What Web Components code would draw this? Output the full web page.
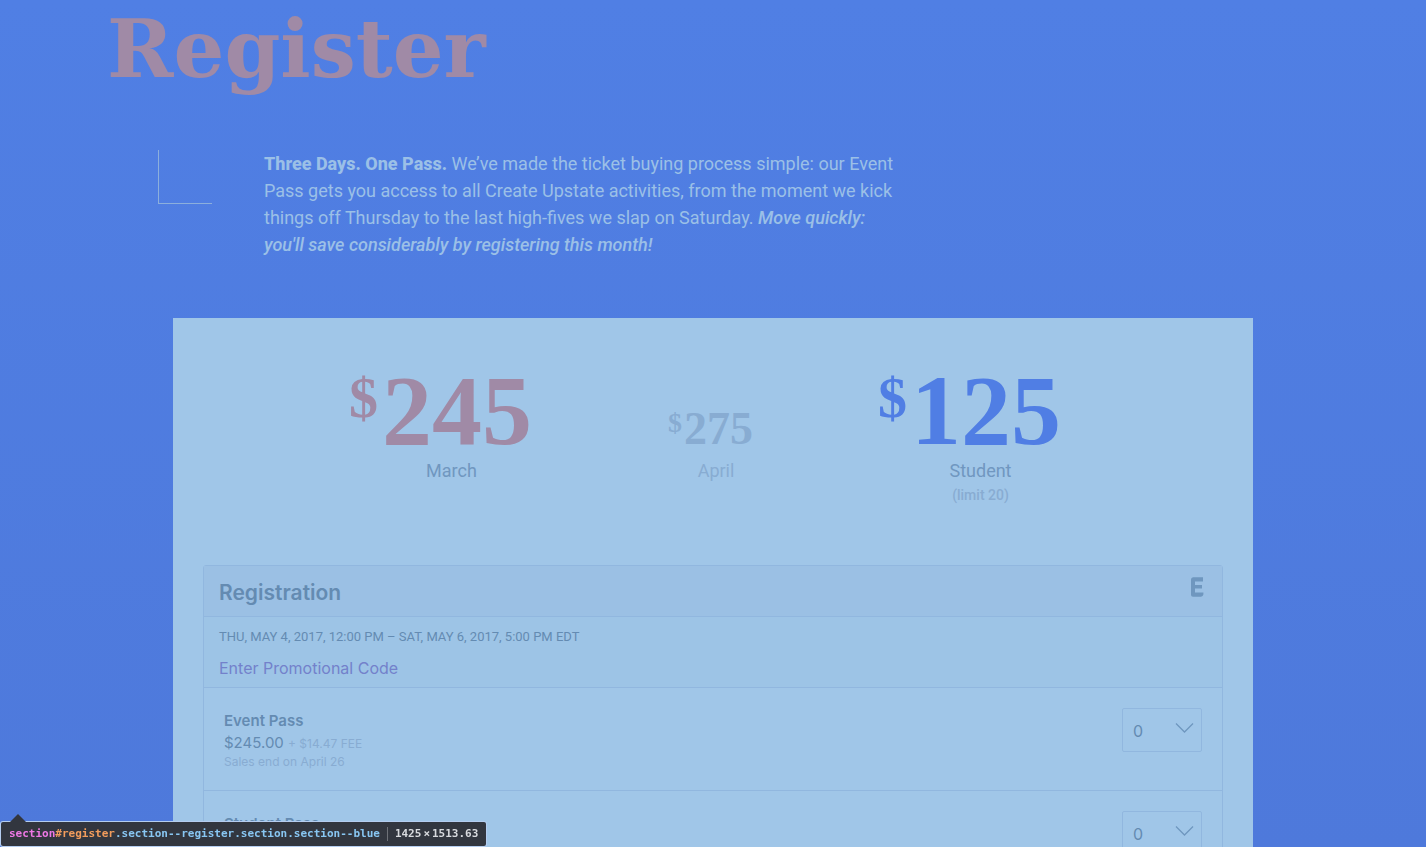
<!DOCTYPE html>
<html lang="en">
<head>
<meta charset="utf-8">
<title>Register – Create Upstate</title>
<style>
  html, body { margin: 0; height: 100%; }
  body { font-family: Roboto, "Liberation Sans", sans-serif; background: #4f7cdf; overflow: hidden; }
</style>
</head>
<body>
<register-section id="register">
  <span slot="title">Register</span>
  <section-intro slot="intro"><b>Three Days. One Pass.</b> We’ve made the ticket buying process simple: our Event Pass gets you access to all Create Upstate activities, from the moment we kick things off Thursday to the last high-fives we slap on Saturday. <em>Move quickly: you'll save considerably by registering this month!</em></section-intro>
  <price-tag slot="prices" amount="245" class="now">March</price-tag>
  <price-tag slot="prices" amount="275" class="later">April</price-tag>
  <price-tag slot="prices" amount="125" class="student">Student<small slot="note">(limit 20)</small></price-tag>
  <ticket-widget slot="tickets">
    <span slot="heading">Registration</span>
    <span slot="date">THU, MAY 4, 2017, 12:00 PM – SAT, MAY 6, 2017, 5:00 PM EDT</span>
    <ticket-row name="Event Pass" price="$245.00" fee="+ $14.47 FEE">Sales end on April 26</ticket-row>
    <ticket-row name="Student Pass" price="$125.00" fee="+ $7.87 FEE">Sales end on April 26</ticket-row>
  </ticket-widget>
</register-section>
<inspect-tip width="1425" height="1513.63">
  <span slot="tag">section</span><span slot="id">#register</span><span slot="classes">.section--register.section.section--blue</span>
</inspect-tip>

<script>
const define = (name, html, setup) => customElements.define(name, class extends HTMLElement {
  constructor() {
    super();
    const t = document.createElement('template');
    t.innerHTML = html;
    this.attachShadow({ mode: 'open' }).appendChild(t.content.cloneNode(true));
  }
  connectedCallback() { if (setup) setup(this, this.shadowRoot); }
});

define('register-section', `
<style>
  :host { display: block; height: 100%; overflow: hidden; background: linear-gradient(#507fe4, #4e79db); }
  .wrap { max-width: 1212px; margin: 0 auto; padding-top: 8px; }
  h1 { margin: 0; font: bold 80px/82px "DejaVu Serif", serif; color: #a08aa6; }
  .intro { margin: 60px 0 60px 51px; }
  .card { max-width: 1020px; margin: 0 auto; padding: 45px 30px 30px; background: #a0c6e8; }
  .prices { display: flex; justify-content: center; align-items: baseline; gap: 114px; min-height: 144px; margin-bottom: 58px; padding-left: 6px; }
</style>
<section class="wrap">
  <h1><slot name="title"></slot></h1>
  <div class="intro"><slot name="intro"></slot></div>
  <div class="card">
    <div class="prices"><slot name="prices"></slot></div>
    <slot name="tickets"></slot>
  </div>
</section>`);

define('section-intro', `
<style>
  :host { display: flex; align-items: flex-start; gap: 52px; }
  .corner { flex: none; width: 53px; height: 53px; border: solid #8cafdc; border-width: 0 0 1px 1px; }
  p { margin: 0; max-width: 640px; font-size: 18px; line-height: 27px; color: #9bc0e7; }
  ::slotted(b) { font-weight: 800; }
  ::slotted(em) { font-weight: 500; }
</style>
<div class="corner"></div><p><slot></slot></p>`);

define('price-tag', `
<style>
  :host { display: block; text-align: center; color: #7097c0; --tone: #a08aa6; }
  :host(.student) { --tone: #507ee4; }
  :host(.later) { --tone: #88acd2; color: #88acd2; }
  .price { font: bold 100px/96px "Liberation Serif", serif; color: var(--tone); padding-right: 22px; }
  .price span { font-size: 58px; line-height: 0; vertical-align: 27px; margin-right: 4px; }
  :host(.later) .price { font-size: 46px; line-height: 60px; padding-right: 11px; }
  :host(.later) .price span { font-size: 28px; vertical-align: 12px; margin-right: 2px; }
  .label { font-size: 18px; line-height: 24px; }
  ::slotted(small) { display: block; font-size: 14px; font-weight: 500; color: #88acd2; }
  .note { line-height: 24px; }
</style>
<div class="price"><span>$</span><b></b></div>
<div class="label"><slot></slot></div>
<div class="note"><slot name="note"></slot></div>`,
(el, root) => { root.querySelector('b').textContent = el.getAttribute('amount'); });

define('ticket-widget', `
<style>
  :host { display: block; font-family: Inter, "Liberation Sans", sans-serif; color: #648bb2; border: 1px solid #91b7df; border-radius: 3px; }
  header { display: flex; justify-content: space-between; align-items: flex-start; padding: 11px 18px 7px 15px; background: #9bc0e4; border-bottom: 1px solid #91b7df; }
  h2 { margin: 0; font-size: 21px; line-height: 32px; font-weight: 600; }
  .info { padding: 10px 15px 9px; background: #9dc4e6; border-bottom: 1px solid #91b7df; }
  .date { font: 13px/20px Roboto, sans-serif; }
  a { display: block; width: max-content; margin-top: 11px; font-size: 16px; line-height: 20px; color: #7381cb; text-decoration: none; }
  svg { display: block; }
</style>
<header>
  <h2><slot name="heading"></slot></h2>
  <svg width="14" height="20" viewBox="0 0 14 20" aria-hidden="true"><path fill="#6f97bf" d="M1 2.4 Q1 .4 3 .2 L13 .2 V4.4 H5 V8 H12 V11.6 H5 V15.6 H13.4 V17.6 Q13 19.6 11 19.8 H3 Q1 19.8 1 18Z"/></svg>
</header>
<div class="info">
  <div class="date"><slot name="date"></slot></div>
  <a href="#promo">Enter Promotional Code</a>
</div>
<slot></slot>`);

define('ticket-row', `
<style>
  :host { display: flex; justify-content: space-between; align-items: flex-start; padding: 20px; border-bottom: 1px solid #91b7df; }
  label { display: block; font-size: 15px; line-height: 22px; font-weight: 600; padding-top: 2px; }
  .cost { font-size: 15px; line-height: 22px; }
  .cost small { font-size: 12px; line-height: 1; color: #88acd2; }
  .until { font-size: 12px; line-height: 16px; color: #88acd2; }
  .pick { display: grid; width: 80px; height: 44px; }
  .pick > * { grid-area: 1 / 1; }
  select { appearance: none; box-sizing: border-box; width: 100%; height: 100%; margin: 0; padding: 2px 10px 0; border: 1px solid #91b7df; border-radius: 2px; background: transparent; font: 16px/20px Inter, sans-serif; color: #648bb2; }
  svg { justify-self: end; margin: 15px 8px 0 0; pointer-events: none; }
</style>
<div><label for="qty"></label>
  <div class="cost"><span></span> <small></small></div>
  <div class="until"><slot></slot></div>
</div>
<div class="pick">
  <select id="qty"><option>0</option><option>1</option><option>2</option></select>
  <svg width="19" height="11" viewBox="0 0 19 11" fill="none" stroke="#6f97bf" stroke-width="1.3"><path d="M1 .5 L9.5 9 L18 .5"/></svg>
</div>`,
(el, root) => {
  root.querySelector('label').textContent = el.getAttribute('name');
  root.querySelector('.cost span').textContent = el.getAttribute('price');
  root.querySelector('small').textContent = el.getAttribute('fee');
});

define('inspect-tip', `
<style>
  :host { position: fixed; left: 1px; bottom: 1px; box-sizing: border-box; display: flex; align-items: center; height: 24px; padding: 0 8px; background: #32363f; border-radius: 2px; box-shadow: 0 0 0 1px #b4cdf0; font: bold 11px/14px "DejaVu Sans Mono", monospace; white-space: nowrap; }
  svg { position: absolute; left: 9px; top: -8px; }
  .tag { color: #ee78e6; } .id { color: #f29c5c; } .cls { color: #88c6f2; }
  .size { margin-left: 7px; padding-left: 7px; border-left: 1px solid #6e7178; color: #d8dade; }
  i { font-style: normal; margin: 0 2px; }
</style>
<svg width="16" height="8" viewBox="0 0 16 8"><path fill="#32363f" d="M0 8 L8 0 L16 8Z"/></svg>
<span class="tag"><slot name="tag"></slot></span><span class="id"><slot name="id"></slot></span><span class="cls"><slot name="classes"></slot></span>
<span class="size"><span class="w"></span><i>×</i><span class="h"></span></span>`,
(el, root) => {
  root.querySelector('.w').textContent = el.getAttribute('width');
  root.querySelector('.h').textContent = el.getAttribute('height');
});
</script>
</body>
</html>
